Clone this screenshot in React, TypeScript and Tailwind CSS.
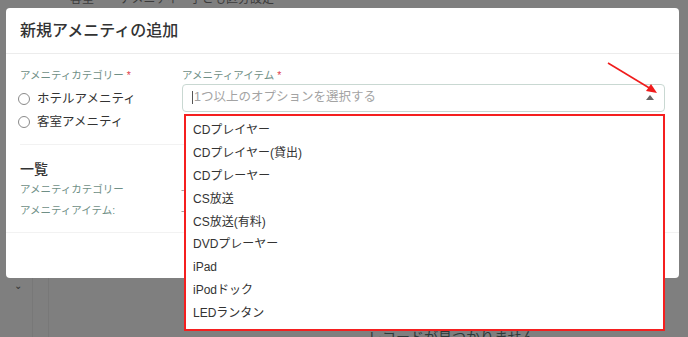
import React from 'react'

const font = { fontFamily: '"Liberation Sans", "Noto Sans CJK JP", sans-serif' }

const options = [
  'CDプレイヤー',
  'CDプレイヤー(貸出)',
  'CDプレーヤー',
  'CS放送',
  'CS放送(有料)',
  'DVDプレーヤー',
  'iPad',
  'iPodドック',
  'LEDランタン',
]

function Radio({ label }: { label: string }) {
  return (
    <label className="flex items-center h-[23px] gap-[7px] -ml-[2px]">
      <span className="w-[12px] h-[12px] rounded-full border border-[#8a8a8a] bg-white" />
      <span className="text-[12.5px] text-[#333]">{label}</span>
    </label>
  )
}

export default function App() {
  return (
    <div className="relative w-[688px] h-[337px] overflow-hidden bg-[#7f7f7f]" style={font}>
      {/* 背面のページ（オーバーレイ越し） */}
      <div className="absolute left-[70px] top-[-10px] text-[12px] text-[#3b3b3b]">客室</div>
      <div className="absolute left-[120px] top-[-10px] text-[12px] text-[#3b3b3b]">アメニティ</div>
      <div className="absolute left-[190px] top-[-10px] text-[12px] text-[#3b3b3b]">子ども区分設定</div>
      <div className="absolute left-[32px] top-[278px] bottom-0 w-px bg-[#787878]" />
      <div className="absolute left-[48px] top-[278px] bottom-0 w-px bg-[#787878]" />
      <div className="absolute left-[14px] top-[278px] text-[10px] text-[#333]">⌄</div>
      <div className="absolute left-[368px] top-[327px] text-[14px] text-[#2e3838]">
        レコードが見つかりません
      </div>

      {/* モーダル */}
      <div className="absolute left-[6px] top-[8px] w-[673px] h-[270px] bg-white rounded-[4px]">
        <div className="h-[46px] flex items-center px-[14px] border-b border-[#ececec]">
          <h2 className="text-[16px] font-medium text-[#333]">新規アメニティの追加</h2>
        </div>

        <div className="px-[14px] pt-[14px]">
          <div className="flex">
            <div className="w-[162px]">
              <div className="text-[10.5px] text-[#6f8f86] mb-[4px]">
                アメニティカテゴリー <span className="text-[#e0414e]">*</span>
              </div>
              <Radio label="ホテルアメニティ" />
              <Radio label="客室アメニティ" />
            </div>
            <div className="flex-1 relative">
              <div className="text-[10.5px] text-[#6f8f86]">
                アメニティアイテム <span className="text-[#e0414e]">*</span>
              </div>
              <div className="h-[28px] w-[483px] border border-[#c9d8d2] rounded-[4px] flex items-center px-[9px]">
                <span className="w-px h-[13px] bg-[#555]" />
                <span className="text-[12.5px] text-[#a3a3a3] ml-[1px]">1つ以上のオプションを選択する</span>
                <span className="ml-auto mr-[1px] w-0 h-0 border-l-[4px] border-r-[4px] border-b-[5px] border-l-transparent border-r-transparent border-b-[#666]" />
              </div>

              {/* ドロップダウン */}
              <div className="absolute z-10 left-[2px] top-[46px] w-[481px] h-[217px] bg-white border-2 border-[#f51f1f] py-[3px]">
                {options.map((o) => (
                  <div key={o} className="h-[22.8px] flex items-center pl-[7px] text-[12px] text-[#333]">
                    {o}
                  </div>
                ))}
              </div>
            </div>
          </div>

          <div className="mt-[10px] border-t border-[#f2f2f2] pt-[15px]">
            <div className="h-[20px] flex items-center text-[14px] font-medium text-[#333]">一覧</div>
            <div className="flex h-[21px] items-center text-[10.5px] text-[#6f8f86]">
              <span className="w-[161px]">アメニティカテゴリー</span>
              <span className="text-[#999]">-</span>
            </div>
            <div className="flex h-[21px] items-center text-[10.5px] text-[#6f8f86]">
              <span className="w-[161px]">アメニティアイテム:</span>
              <span className="text-[#999]">-</span>
            </div>
          </div>
        </div>
        <div className="mt-[10px] border-t border-[#f2f2f2]" />
      </div>

      {/* 注釈の矢印 */}
      <svg className="absolute left-0 top-0 z-20" width="688" height="337">
        <line x1="608" y1="63" x2="651" y2="89" stroke="#f01c1c" strokeWidth="1.6" />
        <polygon points="657,93 646,91 651,84" fill="#f01c1c" />
      </svg>
    </div>
  )
}
